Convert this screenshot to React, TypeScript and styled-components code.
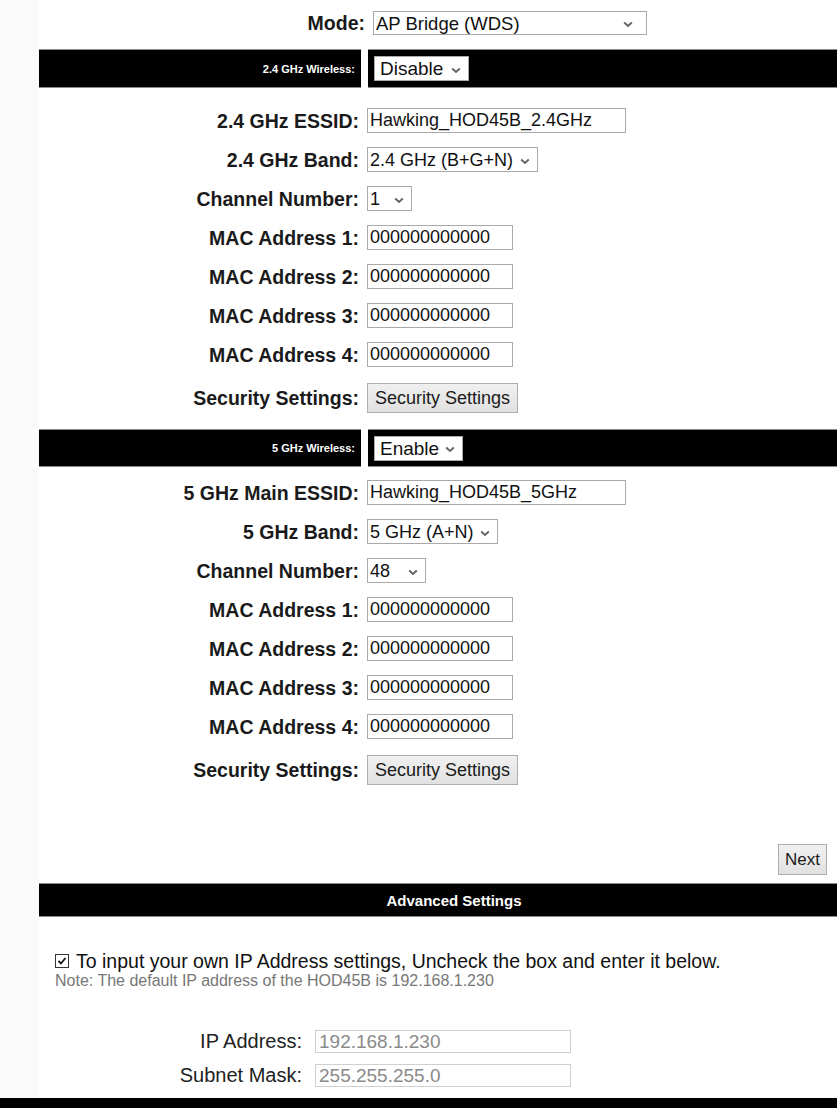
import styled, { createGlobalStyle } from "styled-components"

const Global = createGlobalStyle`
html, body {
    margin: 0;
    padding: 0;
    overflow: hidden;
    background: #fafafa;
    font-family: "Liberation Sans", Arial, sans-serif;
}
`

const Page = styled.div`
padding-left: 39px;
height: 1108px;
display: flex;
flex-direction: column;
`

const Content = styled.div`
background: #fff;
flex: 1;
display: flex;
flex-direction: column;
`

const Footer = styled.div`
height: 10px;
background: #000;
margin-left: -39px;
`

const ModeRow = styled.div`
display: grid;
grid-template-columns: 328px 1fr;
column-gap: 6px;
height: 49px;
padding-top: 11px;
box-sizing: border-box;
align-items: start;
`

const Row = styled.div<{ $h?: number }>`
display: grid;
grid-template-columns: 322px 1fr;
column-gap: 6px;
height: ${p => p.$h ?? 39}px;
align-items: center;
`

const Label = styled.label`
text-align: right;
font-weight: 700;
font-size: 19.5px;
color: #1a1a1a;
padding-right: 2px;
line-height: 24px;
`

const Section = styled.div<{ $top: number }>`
padding-top: ${p => p.$top}px;
`

const Bar = styled.div<{ $h: number }>`
display: grid;
grid-template-columns: 322px 1fr;
column-gap: 7px;
height: ${p => p.$h}px;
background: #fff;
`

const BarCell = styled.div`
background: #000;
border-top: 1px solid #8a8a8a;
border-bottom: 1px solid #8a8a8a;
display: flex;
align-items: center;
`

const BarLabel = styled(BarCell)`
justify-content: flex-end;
padding-right: 6px;
color: #fff;
font-weight: 700;
font-size: 11px;
`

const BarInput = styled(BarCell)`
padding-left: 6px;
`

const TextInput = styled.input<{ $w: number }>`
box-sizing: border-box;
width: ${p => p.$w}px;
height: 25px;
border: 1px solid #a9a9a9;
padding: 0 2px;
font-family: "Liberation Sans", Arial, sans-serif;
font-size: 18px;
color: #111;
background: #fff;
outline: none;
`

const SelectWrap = styled.div<{ $w: number; $h: number }>`
position: relative;
width: ${p => p.$w}px;
height: ${p => p.$h}px;
`

const NativeSelect = styled.select<{ $fs: number; $pl: number }>`
appearance: none;
-webkit-appearance: none;
box-sizing: border-box;
width: 100%;
height: 100%;
border: 1px solid #a9a9a9;
background: #fff;
padding: 0 0 0 ${p => p.$pl}px;
font-family: "Liberation Sans", Arial, sans-serif;
font-size: ${p => p.$fs}px;
color: #111;
outline: none;
`

const Chevron = styled.svg<{ $r: number }>`
position: absolute;
right: ${p => p.$r}px;
top: 50%;
margin-top: -2px;
width: 10px;
height: 7px;
pointer-events: none;
`

const Select = ({ w, h = 25, fs = 18, r = 8, pl = 2, value }: { w: number; h?: number; fs?: number; r?: number; pl?: number; value: string }) => (
    <SelectWrap $w={w} $h={h}>
        <NativeSelect $fs={fs} $pl={pl} defaultValue={value}>
            <option>{value}</option>
        </NativeSelect>
        <Chevron $r={r} viewBox="0 0 10 7">
            <path d="M1.2 1.5 L5 5 L8.8 1.5" fill="none" stroke="#666" strokeWidth="2" />
        </Chevron>
    </SelectWrap>
)

const Button = styled.button<{ $w: number; $h: number; $fs: number }>`
box-sizing: border-box;
width: ${p => p.$w}px;
height: ${p => p.$h}px;
border: 1px solid #adadad;
background: linear-gradient(#f0f0f0, #e1e1e1);
font-family: "Liberation Sans", Arial, sans-serif;
font-size: ${p => p.$fs}px;
color: #1a1a1a;
padding: 0;
`

const NextRow = styled.div`
display: flex;
justify-content: flex-end;
padding: 50px 10px 8px 0;
`

const AdvBar = styled.div`
height: 34px;
box-sizing: border-box;
background: #000;
border-top: 1px solid #8a8a8a;
border-bottom: 1px solid #8a8a8a;
display: flex;
align-items: center;
justify-content: center;
padding-left: 32px;
color: #fff;
font-weight: 700;
font-size: 15px;
`

const IpBlock = styled.div`
padding: 34px 0 0 16px;
`

const CheckLine = styled.div`
display: flex;
align-items: center;
gap: 7px;
font-size: 19.5px;
color: #111;
line-height: 20px;
`

const Box = styled.span`
width: 14px;
height: 14px;
box-sizing: border-box;
border: 1px solid #333;
background: #fff;
display: inline-flex;
align-items: center;
justify-content: center;
`

const Note = styled.div`
font-size: 16px;
color: #777;
line-height: 18px;
margin-top: 1px;
`

const IpRows = styled.div`
display: flex;
flex-direction: column;
gap: 11px;
margin-top: 40px;
margin-left: -16px;
`

const IpRow = styled.div`
display: grid;
grid-template-columns: 263px 256px;
column-gap: 13px;
align-items: center;
height: 23px;
`

const IpLabel = styled.span`
text-align: right;
font-size: 20px;
color: #222;
`

const IpInput = styled.input`
box-sizing: border-box;
height: 23px;
border: 1px solid #cfcfcf;
background: #fff;
padding: 0 3px;
font-family: "Liberation Sans", Arial, sans-serif;
font-size: 19px;
color: #8a8a8a;
outline: none;
`

const macs = [1, 2, 3, 4]

const Band = ({ ssidLabel, ssid, bandLabel, band, bandW, channel, channelW, top }: {
    ssidLabel: string; ssid: string; bandLabel: string; band: string; bandW: number; channel: string; channelW: number; top: number
}) => (
    <Section $top={top}>
        <Row>
            <Label>{ssidLabel}</Label>
            <TextInput $w={259} defaultValue={ssid} />
        </Row>
        <Row>
            <Label>{bandLabel}</Label>
            <Select w={bandW} value={band} />
        </Row>
        <Row>
            <Label>Channel Number:</Label>
            <Select w={channelW} value={channel} />
        </Row>
        {macs.map(n => (
            <Row key={n}>
                <Label>MAC Address {n}:</Label>
                <TextInput $w={146} defaultValue="000000000000" />
            </Row>
        ))}
        <Row $h={48}>
            <Label>Security Settings:</Label>
            <div><Button $w={151} $h={30} $fs={18}>Security Settings</Button></div>
        </Row>
    </Section>
)

export default function App() {
    return (
        <>
            <Global />
            <Page>
                <Content>
                    <ModeRow>
                        <Label>Mode:</Label>
                        <Select w={274} h={24} fs={18.5} r={14} value="AP Bridge (WDS)" />
                    </ModeRow>

                    <Bar $h={39}>
                        <BarLabel>2.4 GHz Wireless:</BarLabel>
                        <BarInput><Select w={95} h={25} fs={19} pl={5} value="Disable" /></BarInput>
                    </Bar>
                    <Band
                        top={13}
                        ssidLabel="2.4 GHz ESSID:"
                        ssid="Hawking_HOD45B_2.4GHz"
                        bandLabel="2.4 GHz Band:"
                        band="2.4 GHz (B+G+N)"
                        bandW={171}
                        channel="1"
                        channelW={45}
                    />

                    <div style={{ height: 7 }} />
                    <Bar $h={38}>
                        <BarLabel>5 GHz Wireless:</BarLabel>
                        <BarInput><Select w={89} h={25} fs={19} pl={5} value="Enable" /></BarInput>
                    </Bar>
                    <Band
                        top={6}
                        ssidLabel="5 GHz Main ESSID:"
                        ssid="Hawking_HOD45B_5GHz"
                        bandLabel="5 GHz Band:"
                        band="5 GHz (A+N)"
                        bandW={131}
                        channel="48"
                        channelW={59}
                    />

                    <NextRow>
                        <Button $w={49} $h={31} $fs={17}>Next</Button>
                    </NextRow>
                    <AdvBar>Advanced Settings</AdvBar>

                    <IpBlock>
                        <CheckLine>
                            <Box>
                                <svg width="10" height="10" viewBox="0 0 10 10">
                                    <path d="M1.5 5 L4 7.5 L8.5 2" fill="none" stroke="#111" strokeWidth="1.8" />
                                </svg>
                            </Box>
                            <span>To input your own IP Address settings, Uncheck the box and enter it below.</span>
                        </CheckLine>
                        <Note>Note: The default IP address of the HOD45B is 192.168.1.230</Note>
                        <IpRows>
                            <IpRow>
                                <IpLabel>IP Address:</IpLabel>
                                <IpInput defaultValue="192.168.1.230" />
                            </IpRow>
                            <IpRow>
                                <IpLabel>Subnet Mask:</IpLabel>
                                <IpInput defaultValue="255.255.255.0" />
                            </IpRow>
                        </IpRows>
                    </IpBlock>
                </Content>
                <Footer />
            </Page>
        </>
    )
}
